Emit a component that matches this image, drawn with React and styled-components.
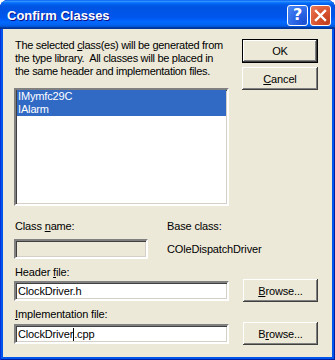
import styled, { createGlobalStyle } from "styled-components";

const Global = createGlobalStyle`
  html, body { margin: 0; padding: 0; background: #fff; }
  * { box-sizing: border-box; }
`;

export default function App() {
  return (
    <>
      <Global />
      <Window>
        <TitleBar>
          <Title>Confirm Classes</Title>
          <TitleButtons>
            <HelpButton>?</HelpButton>
            <CloseButton>
              <svg width="13" height="13" viewBox="0 0 13 13">
                <path d="M2 2 L11 11 M11 2 L2 11" stroke="#fff" strokeWidth="2.4" strokeLinecap="square" />
              </svg>
            </CloseButton>
          </TitleButtons>
        </TitleBar>
        <Client>
          <Top>
            <LeftCol>
              <Intro>
                <IntroLine>The selected <u>c</u>lass(es) will be generated from</IntroLine>
                <IntroLine>the type library.&nbsp; All classes will be placed in</IntroLine>
                <IntroLine>the same header and implementation files.</IntroLine>
              </Intro>
              <ListBox>
                <Item $selected>IMymfc29C</Item>
                <Item $selected>IAlarm</Item>
              </ListBox>
            </LeftCol>
            <ButtonCol>
              <Button $default>OK</Button>
              <Button><u>C</u>ancel</Button>
            </ButtonCol>
          </Top>

          <ClassGrid>
            <Label>Class <u>n</u>ame:</Label>
            <Label>Base class:</Label>
            <Edit $disabled $width={134} />
            <Static>COleDispatchDriver</Static>
          </ClassGrid>

          <FileLabel>Header <u>f</u>ile:</FileLabel>
          <FileRow>
            <Edit $width={215}>ClockDriver.h</Edit>
            <Button $browse><u>B</u>rowse...</Button>
          </FileRow>

          <FileLabel $tight><u>I</u>mplementation file:</FileLabel>
          <FileRow>
            <Edit $width={215}>ClockDriver<Caret />.cpp</Edit>
            <Button $browse>B<u>r</u>owse...</Button>
          </FileRow>
        </Client>
      </Window>
    </>
  );
}

const Window = styled.div`
  width: 335px;
  height: 360px;
  display: flex;
  flex-direction: column;
  font-family: "Liberation Sans", Arial, sans-serif;
  font-size: 11px;
  letter-spacing: -0.15px;
  color: #000;
  background: #0055ea;
  box-shadow: inset 1px 0 #0831d9, inset -1px 0 #001ea0, inset 0 -1px #001ea0;
  border-radius: 8px 8px 0 0;
  overflow: hidden;
`;

const TitleBar = styled.div`
  height: 29px;
  flex: none;
  display: flex;
  align-items: center;
  justify-content: space-between;
  padding: 1px 4px 0 7px;
  background: linear-gradient(
    to bottom,
    #0058ee 0%,
    #3593ff 4%,
    #288eff 6%,
    #127dff 8%,
    #036ffc 10%,
    #0262ee 14%,
    #0057e5 20%,
    #0054e3 24%,
    #0055eb 56%,
    #005bf5 66%,
    #026afe 76%,
    #0062ef 86%,
    #0052d6 92%,
    #0040ab 94%,
    #003092 100%
  );
`;

const Title = styled.div`
  color: #fff;
  font-family: "Liberation Sans", Arial, sans-serif;
  font-weight: bold;
  font-size: 13px;
  letter-spacing: 0;
  text-shadow: 1px 1px #0f1089;
`;

const TitleButtons = styled.div`
  display: flex;
  gap: 2px;
`;

const TitleBtn = styled.div`
  width: 21px;
  height: 21px;
  border: 1px solid #fff;
  border-radius: 3px;
  display: flex;
  align-items: center;
  justify-content: center;
`;

const HelpButton = styled(TitleBtn)`
  background: radial-gradient(circle at 85% 85%, #1d50d3 0%, #2a66e6 45%, #4d8af5 100%);
  color: #fff;
  font-family: "DejaVu Sans", sans-serif;
  font-weight: bold;
  font-size: 16px;
  line-height: 1;
`;

const CloseButton = styled(TitleBtn)`
  background: radial-gradient(circle at 85% 85%, #c2401c 0%, #d9532f 50%, #eb7d5c 100%);
`;

const Client = styled.div`
  flex: 1;
  margin: 0 3px 3px 3px;
  background: #ece9d8;
  padding: 10px 14px 0 11px;
`;

const Top = styled.div`
  display: flex;
  gap: 13px;
`;

const LeftCol = styled.div`
  width: 215px;
  display: flex;
  flex-direction: column;
`;

const Intro = styled.div`
  margin: 0 0 10px 1px;
  line-height: 13px;
  letter-spacing: -0.3px;
`;

const IntroLine = styled.div`
  white-space: nowrap;
  height: 13px;
`;

const ListBox = styled.div`
  height: 118px;
  background: #fff;
  border: 2px solid;
  border-color: #808080 #fff #fff #808080;
  box-shadow: inset 1px 1px #404040, inset -1px -1px #d4d0c8;
  padding: 0 1px;
`;

const Item = styled.div`
  height: 13px;
  line-height: 13px;
  padding-left: 1px;
  background: ${(p) => (p.$selected ? "#316ac5" : "transparent")};
  color: ${(p) => (p.$selected ? "#fff" : "#000")};
`;

const ButtonCol = styled.div`
  width: 76px;
  display: flex;
  flex-direction: column;
  gap: 4px;
`;

const Button = styled.div`
  width: ${(p) => (p.$browse ? "75px" : "76px")};
  height: ${(p) => (p.$default ? "24px" : "23px")};
  display: flex;
  align-items: center;
  justify-content: center;
  background: #ece9d8;
  border: ${(p) => (p.$default ? "1px solid #000" : "none")};
  box-shadow: inset -1px -1px #404040, inset 1px 1px #fff, inset -2px -2px #808080, inset 2px 2px #ece9d8;
  flex: none;
`;

const ClassGrid = styled.div`
  display: grid;
  grid-template-columns: 152px 1fr;
  grid-template-rows: 13px 20px;
  row-gap: 6px;
  margin-top: 14px;
  align-items: center;
`;

const Label = styled.div`
  line-height: 13px;
  margin-left: 1px;
`;

const Static = styled.div`
  line-height: 13px;
  margin-left: 1px;
`;

const Edit = styled.div`
  width: ${(p) => p.$width}px;
  height: 20px;
  background: ${(p) => (p.$disabled ? "#ece9d8" : "#fff")};
  border: 2px solid;
  border-color: #808080 #fff #fff #808080;
  box-shadow: inset 1px 1px #404040, inset -1px -1px #d4d0c8;
  padding: 0 2px;
  line-height: 16px;
  white-space: nowrap;
  flex: none;
`;

const Caret = styled.span`
  display: inline-block;
  width: 0;
  height: 13px;
  border-left: 1px solid #000;
  vertical-align: -3px;
`;

const FileLabel = styled.div`
  line-height: 13px;
  margin: ${(p) => (p.$tight ? "6px 0 1px 1px" : "7px 0 0 1px")};
`;

const FileRow = styled.div`
  display: flex;
  align-items: center;
  gap: 14px;
`;
